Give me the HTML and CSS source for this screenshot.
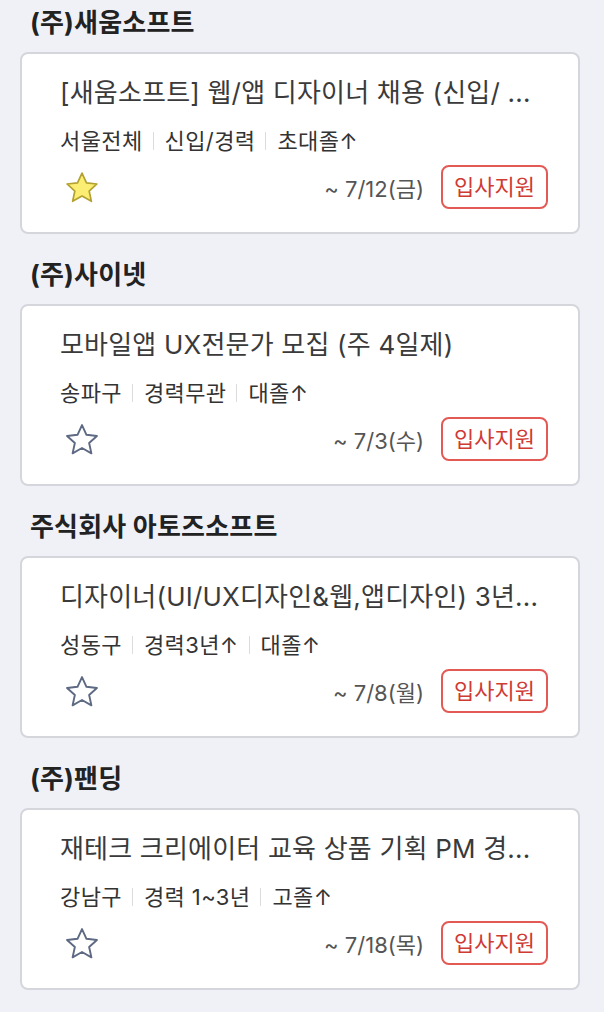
FILE: index.html
```html
<!DOCTYPE html>
<html lang="ko">
<head>
<meta charset="utf-8">
<link rel="stylesheet" href="styles.css">
</head>
<body>
<div class="list">
  <section class="group">
    <h2 class="company">(주)새움소프트</h2>
    <div class="card">
      <div class="title">[새움소프트] 웹/앱 디자이너 채용 (신입/ ...</div>
      <div class="meta"><span>서울전체</span><i class="sep"></i><span>신입/경력</span><i class="sep"></i><span>초대졸↑</span></div>
      <div class="bottom">
        <svg class="star" viewBox="2 1.5 30 29"><path class="on" d="M17 2.5 L21.2 11.6 L31 12.7 L23.7 19.3 L25.8 29 L17 24 L8.2 29 L10.3 19.3 L3 12.7 L12.8 11.6 Z"/></svg>
        <span class="date">~ 7/12(금)</span>
        <button class="apply">입사지원</button>
      </div>
    </div>
  </section>
  <section class="group">
    <h2 class="company">(주)사이넷</h2>
    <div class="card">
      <div class="title">모바일앱 UX전문가 모집 (주 4일제)</div>
      <div class="meta"><span>송파구</span><i class="sep"></i><span>경력무관</span><i class="sep"></i><span>대졸↑</span></div>
      <div class="bottom">
        <svg class="star" viewBox="2 1.5 30 29"><path class="off" d="M17 2.5 L21.2 11.6 L31 12.7 L23.7 19.3 L25.8 29 L17 24 L8.2 29 L10.3 19.3 L3 12.7 L12.8 11.6 Z"/></svg>
        <span class="date">~ 7/3(수)</span>
        <button class="apply">입사지원</button>
      </div>
    </div>
  </section>
  <section class="group">
    <h2 class="company">주식회사 아토즈소프트</h2>
    <div class="card">
      <div class="title">디자이너(UI/UX디자인&amp;웹,앱디자인) 3년...</div>
      <div class="meta"><span>성동구</span><i class="sep"></i><span>경력3년↑</span><i class="sep"></i><span>대졸↑</span></div>
      <div class="bottom">
        <svg class="star" viewBox="2 1.5 30 29"><path class="off" d="M17 2.5 L21.2 11.6 L31 12.7 L23.7 19.3 L25.8 29 L17 24 L8.2 29 L10.3 19.3 L3 12.7 L12.8 11.6 Z"/></svg>
        <span class="date">~ 7/8(월)</span>
        <button class="apply">입사지원</button>
      </div>
    </div>
  </section>
  <section class="group">
    <h2 class="company">(주)팬딩</h2>
    <div class="card">
      <div class="title">재테크 크리에이터 교육 상품 기획 PM 경...</div>
      <div class="meta"><span>강남구</span><i class="sep"></i><span>경력 1~3년</span><i class="sep"></i><span>고졸↑</span></div>
      <div class="bottom">
        <svg class="star" viewBox="2 1.5 30 29"><path class="off" d="M17 2.5 L21.2 11.6 L31 12.7 L23.7 19.3 L25.8 29 L17 24 L8.2 29 L10.3 19.3 L3 12.7 L12.8 11.6 Z"/></svg>
        <span class="date">~ 7/18(목)</span>
        <button class="apply">입사지원</button>
      </div>
    </div>
  </section>
</div>
</body>
</html>
```

FILE: styles.css
```css
* { box-sizing: border-box; }
html, body {
  margin: 0;
  padding: 0;
  background: #f0f1f7;
  font-family: Inter, "Noto Sans CJK KR", "Noto Sans", sans-serif;
  color: #333;
}
.list {
  padding: 6px 24px 0 20px;
  display: flex;
  flex-direction: column;
  gap: 24px;
}
.group {
  display: flex;
  flex-direction: column;
}
.company {
  margin: 0 0 12px 10px;
  font-size: 26px;
  line-height: 34px;
  font-weight: 700;
  color: #222;
  letter-spacing: 0.2px;
}
.card {
  background: #fff;
  border: 2px solid #d5d6dc;
  border-radius: 8px;
  height: 182px;
  padding: 21px 30px 0 38px;
  display: flex;
  flex-direction: column;
}
.title {
  font-size: 26px;
  line-height: 36px;
  color: #3a3a3a;
  white-space: nowrap;
  overflow: hidden;
  letter-spacing: 0.2px;
}
.meta {
  margin-top: 16px;
  display: flex;
  align-items: center;
  font-size: 22px;
  line-height: 28px;
  color: #333;
  letter-spacing: 0.4px;
}
.sep {
  display: inline-block;
  width: 1px;
  height: 18px;
  background: #dcdcdc;
  margin: 0 11px 0 10px;
}
.bottom {
  margin-top: 10px;
  display: flex;
  align-items: center;
  height: 44px;
}
.star {
  width: 32px;
  height: 31px;
  margin-left: 6px;
}
.star .on {
  fill: #fbee72;
  stroke: #b3a233;
  stroke-width: 1.6;
  stroke-linejoin: round;
}
.star .off {
  fill: none;
  stroke: #5e6a84;
  stroke-width: 1.8;
  stroke-linejoin: round;
}
.date {
  margin-left: auto;
  font-size: 22px;
  color: #555;
  margin-right: 17px;
}
.apply {
  font-family: inherit;
  font-size: 22px;
  color: #cf3a34;
  background: #fff;
  border: 2px solid #e35a55;
  border-radius: 8px;
  height: 44px;
  padding: 0 11px;
  line-height: 38px;
}
```
